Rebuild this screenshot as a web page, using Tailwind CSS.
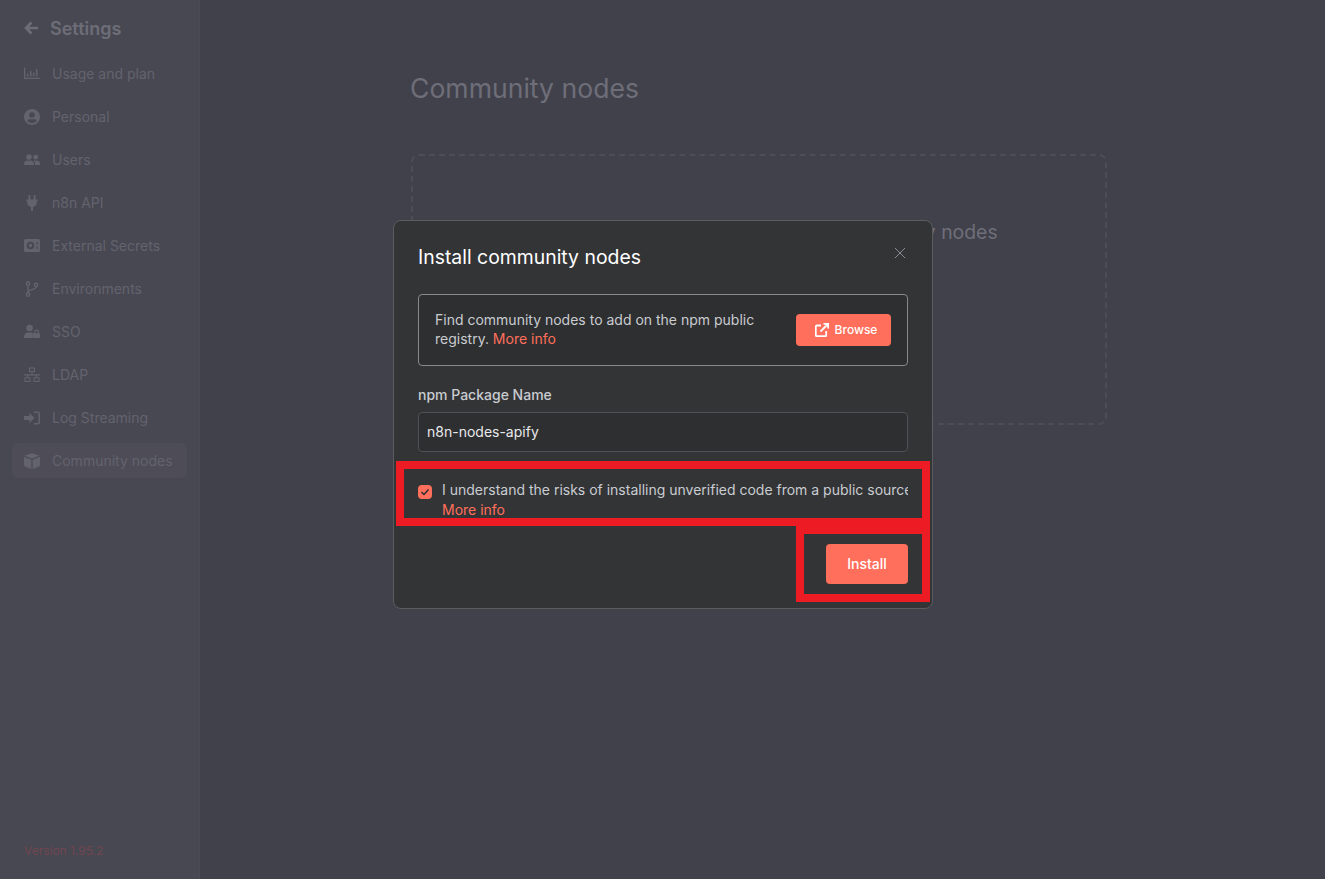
<!DOCTYPE html>
<html lang="en">
<head>
    <meta charset="utf-8" />
    <meta name="viewport" content="width=device-width, initial-scale=1.0" />
    <title>Community nodes</title>
    <script src="https://cdn.jsdelivr.net/npm/@tailwindcss/browser@4"></script>
</head>
<body class="bg-[#41414b] font-['Inter',sans-serif] overflow-hidden">
    <div class="relative flex h-[879px] w-[1325px]">
        <!-- sidebar -->
        <aside class="flex h-full w-[200px] shrink-0 flex-col border-r border-[#4c4c56] bg-[#484852] text-[#63636e]">
            <div class="flex h-[56px] items-center gap-3 pl-6 text-[#6d6d78]">
                <svg class="w-[14px] h-[14px]" viewBox="0 0 14 14" fill="none" stroke="currentColor" stroke-width="2.600"><path d="M14 7H2M7.500 1.500 2 7l5.500 5.500"/></svg>
                <span class="text-[18px] font-semibold">Settings</span>
            </div>
            <nav class="flex flex-col gap-2 text-sm">
                <a class="mx-3 flex h-[35px] items-center gap-3 rounded-md pl-3">
                    <svg class="h-4 w-4" viewBox="0 0 16 16" fill="currentColor"><path d="M0 1.500h1.300V11.700H16V13H0z"/><rect x="3" y="7.500" width="1.500" height="3"/><rect x="6" y="5" width="1.500" height="5.500"/><rect x="9" y="6.500" width="1.500" height="4"/><rect x="12" y="3" width="1.500" height="7.500"/></svg>
                    <span>Usage and plan</span>
                </a>
                <a class="mx-3 flex h-[35px] items-center gap-3 rounded-md pl-3">
                    <svg class="h-4 w-4" viewBox="0 0 16 16" fill="currentColor"><path fill-rule="evenodd" d="M8 0a8 8 0 1 1 0 16A8 8 0 0 1 8 0zm0 3.200a2.800 2.800 0 1 0 0 5.600 2.800 2.800 0 0 0 0-5.600zM8 14c1.900 0 3.600-.9 4.700-2.200C12.200 10.700 11.200 10 10 10c-.6 0-1.200.3-2 .3S6.600 10 6 10c-1.200 0-2.200.7-2.700 1.800C4.400 13.100 6.100 14 8 14z"/></svg>
                    <span>Personal</span>
                </a>
                <a class="mx-3 flex h-[35px] items-center gap-3 rounded-md pl-3">
                    <svg class="h-4 w-4" viewBox="0 0 16 16" fill="currentColor"><circle cx="5" cy="5" r="2.800"/><circle cx="11.700" cy="5.200" r="2.400"/><path d="M0 12.500C0 10 1.700 8.500 3.300 8.500c.6 0 1 .3 1.700.3s1.100-.3 1.700-.3c1.600 0 3.300 1.500 3.300 4v.5H0z"/><path d="M11 13v-.700c0-1.500-.6-2.800-1.500-3.700.5-.2 1-.2 1.300-.1.400.1.600.2.900.2s.5-.1.900-.2c1.900-.2 3.400 1.300 3.400 3.500v1z"/></svg>
                    <span>Users</span>
                </a>
                <a class="mx-3 flex h-[35px] items-center gap-3 rounded-md pl-3">
                    <svg class="h-4 w-4" viewBox="0 0 16 16" fill="currentColor"><rect x="4.500" y="0" width="1.800" height="5"/><rect x="9.700" y="0" width="1.800" height="5"/><path d="M2.500 4.500h11v1.700h-.7v1.600c0 2.300-1.700 3.900-3.800 4.200V16H7v-4C4.900 11.700 3.200 10.100 3.200 7.800V6.200h-.7z"/></svg>
                    <span>n8n API</span>
                </a>
                <a class="mx-3 flex h-[35px] items-center gap-3 rounded-md pl-3">
                    <svg class="h-4 w-4" viewBox="0 0 16 16" fill="currentColor"><path fill-rule="evenodd" d="M1.500 1h13A1.500 1.500 0 0 1 16 2.500v10a1.500 1.500 0 0 1-1.500 1.500H1.500A1.500 1.500 0 0 1 0 12.500v-10A1.500 1.500 0 0 1 1.500 1zM6.500 3.700a3.800 3.800 0 1 0 0 7.600 3.800 3.800 0 0 0 0-7.600zm0 2.100a1.700 1.700 0 1 1 0 3.400 1.700 1.700 0 0 1 0-3.400zM12.500 4v2.500h1.200V4zm0 4.500V11h1.200V8.500z"/></svg>
                    <span>External Secrets</span>
                </a>
                <a class="mx-3 flex h-[35px] items-center gap-3 rounded-md pl-3">
                    <svg class="h-4 w-4" viewBox="0 0 16 16" fill="none" stroke="currentColor" stroke-width="1.400"><circle cx="4" cy="2.500" r="1.700"/><circle cx="4" cy="13.500" r="1.700"/><circle cx="12" cy="4" r="1.700"/><path d="M4 4.200v7.600M12 5.700c0 3.300-6.500 2.300-8 5"/></svg>
                    <span>Environments</span>
                </a>
                <a class="mx-3 flex h-[35px] items-center gap-3 rounded-md pl-3">
                    <svg class="h-4 w-4" viewBox="0 0 16 16" fill="currentColor"><circle cx="5.600" cy="4" r="3.200"/><path d="M0 14v-1.200C0 10.500 1.800 8.500 4 8.500h3.200c.5 0 1 .1 1.500.3V14z"/><path fill-rule="evenodd" d="M9.500 9.200h.7V8a2.400 2.400 0 0 1 4.800 0v1.200h.2c.4 0 .8.400.8.800v3.200c0 .4-.4.800-.8.800H9.500c-.4 0-.8-.4-.8-.8V10c0-.4.400-.8.800-.8zm1.900 0h2.400V8a1.200 1.200 0 0 0-2.400 0z"/></svg>
                    <span>SSO</span>
                </a>
                <a class="mx-3 flex h-[35px] items-center gap-3 rounded-md pl-3">
                    <svg class="h-4 w-4" viewBox="0 0 16 16" fill="none" stroke="currentColor" stroke-width="1.100"><rect x="5.500" y="1" width="5" height="3.600"/><rect x="1" y="10.800" width="5" height="3.600"/><rect x="10" y="10.800" width="5" height="3.600"/><path d="M8 4.600v3.300M0 7.900h16M3.500 7.900v2.900M12.500 7.900v2.900"/></svg>
                    <span>LDAP</span>
                </a>
                <a class="mx-3 flex h-[35px] items-center gap-3 rounded-md pl-3">
                    <svg class="h-4 w-4" viewBox="0 0 16 16" fill="currentColor"><path d="M0 6h5.500V3L10.500 8l-5 5v-3H0z"/><path d="M10 1.500h3.500A2.500 2.500 0 0 1 16 4v8a2.500 2.500 0 0 1-2.500 2.500H10V13h3.500a1 1 0 0 0 1-1V4a1 1 0 0 0-1-1H10z"/></svg>
                    <span>Log Streaming</span>
                </a>
                <a class="mx-3 flex h-[35px] items-center gap-3 rounded-md bg-[#4d4c57] pl-3">
                    <svg class="h-4 w-4" viewBox="0 0 16 16" fill="currentColor"><path d="M8 0 15.500 2.800 8 5.600.5 2.800z"/><path d="M0 4l7.300 2.800V16L1 13.500c-.6-.2-1-.8-1-1.400z"/><path d="M16 4 8.700 6.800V16l6.300-2.500c.6-.2 1-.8 1-1.400z"/></svg>
                    <span>Community nodes</span>
                </a>
            </nav>
            <div class="mt-auto pb-5 pl-6 text-xs leading-4 text-[#704650]">Version 1.95.2</div>
        </aside>

        <!-- page behind the modal -->
        <main class="flex-1 pl-[210px]">
            <h1 class="mt-[70px] text-[26.6px] leading-9 text-[#6e6e79]">Community nodes</h1>
            <div class="ml-px mt-12 h-[271px] w-[696px] rounded-lg border-2 border-dashed border-[#4d4d57] pt-[62px] text-center text-[19.4px] leading-7 text-[#6e6e79]">
                Supercharge your workflows with community nodes
            </div>
        </main>

        <!-- modal -->
        <div class="absolute left-[393px] top-[220px] w-[540px] rounded-lg border border-[#5b5c60] bg-[#333436] px-6 pb-6 pt-[22px]">
            <button class="absolute right-[26px] top-[26px] text-[#8a8b8e]">
                <svg class="h-[12px] w-[12px]" viewBox="0 0 12 12" fill="none" stroke="currentColor" stroke-width="1"><path d="M1 1l10 10M11 1 1 11"/></svg>
            </button>
            <h2 class="text-[19.4px] leading-7 font-normal text-white">Install community nodes</h2>
            <div class="mt-[23px] flex h-[72px] items-center justify-between rounded border border-[#88898b] bg-[#2e2f30] px-4">
                <p class="-mt-0.5 w-[340px] text-sm leading-[19px] text-[#c9ccd1]">Find community nodes to add on the npm public registry. <a class="text-[#ff6f5c]">More info</a></p>
                <button class="flex h-8 w-[95px] items-center justify-center gap-[6px] rounded bg-[#ff6f5c] pl-[5px] text-xs font-medium text-white">
                    <svg class="h-[14px] w-[14px]" viewBox="0 0 14 14" fill="none" stroke="currentColor" stroke-width="1.800"><path d="M6 2.500H1.800a1 1 0 0 0-1 1v8.700a1 1 0 0 0 1 1h8.400a1 1 0 0 0 1-1V8M5.500 8.500 13 1M8.500.800H13.200V5.500"/></svg>
                    Browse
                </button>
            </div>
            <label class="mt-[19px] block text-sm leading-5 font-medium text-[#c9ccd1]">npm Package Name</label>
            <div class="mt-[7px] flex h-10 items-center rounded border border-[#505154] bg-[#2e2f30] pl-2 text-sm text-[#e8e9eb]">n8n-nodes-apify</div>
            <div class="mt-7 flex gap-[10px]">
                <span class="mt-[5px] flex h-[14px] w-[14px] shrink-0 items-center justify-center rounded-sm bg-[#ff6f5c]">
                    <svg class="h-[10px] w-[10px]" viewBox="0 0 10 10" fill="none" stroke="#2a2a2c" stroke-width="1.400"><path d="M1.500 5 4 7.500 8.500 2.500"/></svg>
                </span>
                <p class="min-w-0 flex-1 overflow-hidden whitespace-nowrap text-sm leading-5 text-[#c9ccd1]">I understand the risks of installing unverified code from a public source<br><a class="text-[#ff6f5c]">More info</a></p>
            </div>
            <div class="mt-6 flex justify-end">
                <button class="h-10 w-[82px] rounded bg-[#ff6f5c] text-sm font-medium text-white">Install</button>
            </div>
        </div>

        <!-- annotation boxes -->
        <div class="absolute left-[396px] top-[461px] h-[65px] w-[534px] border-8 border-[#ed1c24]"></div>
        <div class="absolute left-[796px] top-[526px] h-[76px] w-[134px] border-8 border-[#ed1c24]"></div>
    </div>
</body>
</html>
